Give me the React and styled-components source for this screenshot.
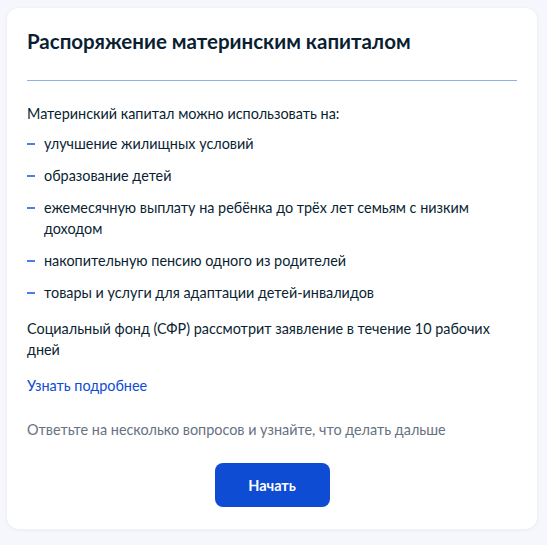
import React from 'react';
import styled, { createGlobalStyle } from 'styled-components';

const GlobalStyle = createGlobalStyle`
  body {
    margin: 0;
    background: #f5f7fc;
    font-family: Lato, "Noto Sans", sans-serif;
    color: #0b1f33;
  }
`;

const uses = [
  'улучшение жилищных условий',
  'образование детей',
  'ежемесячную выплату на ребёнка до трёх лет семьям с низким доходом',
  'накопительную пенсию одного из родителей',
  'товары и услуги для адаптации детей-инвалидов',
];

function App() {
  return (
    <>
      <GlobalStyle />
      <Page>
        <Card>
          <Title>Распоряжение материнским капиталом</Title>
          <Divider />
          <Text>Материнский капитал можно использовать на:</Text>
          <List>
            {uses.map((item) => (
              <Item key={item}>{item}</Item>
            ))}
          </List>
          <Text spaced>
            Социальный фонд (СФР) рассмотрит заявление в течение 10 рабочих дней
          </Text>
          <Link href="#">Узнать подробнее</Link>
          <Hint>Ответьте на несколько вопросов и узнайте, что делать дальше</Hint>
          <Actions>
            <Button type="button">Начать</Button>
          </Actions>
        </Card>
      </Page>
    </>
  );
}

const Page = styled.div`
  padding: 8px 10px 16px 7px;
`;

const Card = styled.section`
  display: flex;
  flex-direction: column;
  background: #fff;
  border-radius: 12px;
  box-shadow: 0 1px 4px rgba(11, 31, 51, 0.06);
  padding: 19px 20px 22px;
`;

const Title = styled.h1`
  margin: 0;
  font-size: 20.5px;
  line-height: 28px;
  font-weight: 700;
  color: #0b1f33;
`;

const Divider = styled.hr`
  margin: 25px 0 22px;
  border: 0;
  height: 1px;
  background: #8fb0e8;
`;

const Text = styled.p`
  margin: ${(props) => (props.spaced ? '15px 0 0' : '0')};
  font-size: 14.4px;
  line-height: 21px;
`;

const List = styled.ul`
  list-style: none;
  margin: 9px 0 0;
  padding: 0;
  display: flex;
  flex-direction: column;
  gap: 11px;
`;

const Item = styled.li`
  position: relative;
  padding-left: 17px;
  font-size: 14.4px;
  line-height: 21px;

  &::before {
    content: '';
    position: absolute;
    left: 0;
    top: 10px;
    width: 8px;
    height: 2px;
    background: #4d7ce6;
  }
`;

const Link = styled.a`
  margin-top: 15px;
  align-self: flex-start;
  font-size: 14.4px;
  line-height: 21px;
  color: #0d4cd3;
  text-decoration: none;
`;

const Hint = styled.p`
  margin: 23px 0 0;
  font-size: 14.4px;
  line-height: 21px;
  color: #66727f;
`;

const Actions = styled.div`
  display: flex;
  justify-content: center;
  margin-top: 23px;
`;

const Button = styled.button`
  width: 115px;
  height: 44px;
  border: 0;
  border-radius: 8px;
  background: #0d4cd3;
  color: #fff;
  font-family: Lato, "Noto Sans", sans-serif;
  font-size: 14.5px;
  font-weight: 700;
`;

export default App;
